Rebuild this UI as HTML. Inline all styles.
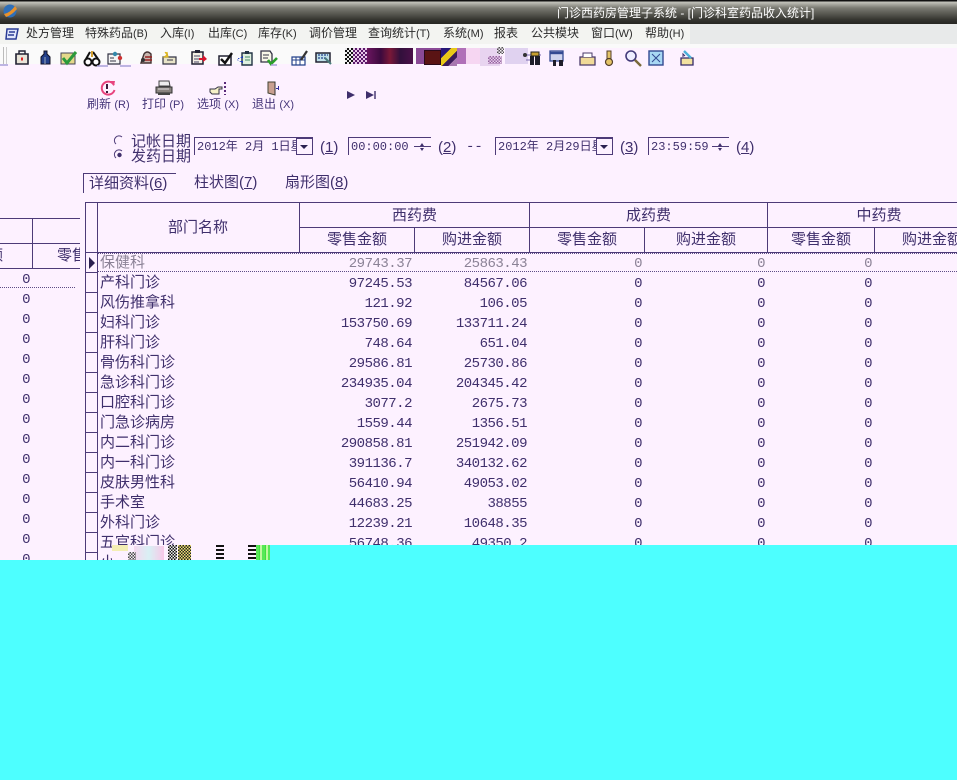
<!DOCTYPE html>
<html lang="zh"><head><meta charset="utf-8"><title>门诊科室药品收入统计</title>
<style>
html,body{margin:0;padding:0;background:#fdf1ff}
body{position:relative;width:957px;height:780px;overflow:hidden;font-family:"Liberation Sans","WenQuanYi Zen Hei","Noto Sans CJK SC",sans-serif;color:#3f2f6c}
div,span,svg{position:absolute}
u,small{position:static}
small{font-size:11px}
.t{white-space:nowrap;line-height:20px}
#title{left:0;top:0;width:957px;height:24px;background:linear-gradient(#111 0,#111 1px,#c4c4bc 2px,#7a7a72 8px,#33332e 20px,#262622 24px)}
#title .t{left:557px;top:3px;color:#fff;font-size:12px}
#menu{left:0;top:24px;width:957px;height:20px;background:#e8eaea}
#menu i{position:absolute;left:0;top:0;width:690px;height:20px;background:#f3f4f1}
#menu .t{top:-1px;font-size:12px;color:#2b2b2b}
#tb{left:0;top:44px;width:957px;height:20px;background:#fafafa}
#tbp{left:480px;top:48px;width:477px;height:20px;background:#fdf1ff}
.btn{font-size:12px;top:94px;color:#46367a}
.lab{font-size:15px}
.dt{font-size:12px;font-family:"Liberation Mono","WenQuanYi Zen Hei",monospace;color:#3f2f6c}
.ln{background:#4d3b78}
.dot{height:1px;background:repeating-linear-gradient(90deg,#5d4d86 0 1px,transparent 1px 2px)}
.h{font-size:15px;text-align:center;line-height:24px;height:24px}
.r{left:0;width:957px;height:20px;font-size:14px;line-height:20px;white-space:nowrap}
.r span{font-family:"Liberation Mono",monospace;text-align:right;width:90px;top:1px;letter-spacing:-.5px}
.r b{font-weight:normal;position:absolute;left:100px;top:0;font-size:15px}
.a{left:322px}.b{left:437px}.c{left:552px}.d{left:675px}.e{left:782px}
.noise{background:repeating-conic-gradient(#111 0 25%,#eee 0 50%) 0 0/3px 3px}
.noise2{background:repeating-conic-gradient(#5a1a6a 0 25%,#e8c8e8 0 50%) 0 0/4px 4px}
</style></head><body>

<div id="title"><div class="t">门诊西药房管理子系统 - [门诊科室药品收入统计]</div></div>
<svg style="left:2px;top:3px" width="16" height="16" viewBox="0 0 16 16"><circle cx="8" cy="8" r="6.5" fill="#2f6fb8"/><path d="M2 11Q8 10 13 3L15 6Q10 12 4 14Z" fill="#e8912b"/></svg>

<div id="menu"><i></i>
<div class="t" style="left:26px">处方管理</div><div class="t" style="left:85px">特殊药品<small>(B)</small></div><div class="t" style="left:160px">入库<small>(I)</small></div><div class="t" style="left:208px">出库<small>(C)</small></div><div class="t" style="left:258px">库存<small>(K)</small></div><div class="t" style="left:309px">调价管理</div><div class="t" style="left:368px">查询统计<small>(T)</small></div><div class="t" style="left:443px">系统<small>(M)</small></div><div class="t" style="left:494px">报表</div><div class="t" style="left:531px">公共模块</div><div class="t" style="left:591px">窗口<small>(W)</small></div><div class="t" style="left:645px">帮助<small>(H)</small></div>
</div>
<svg style="left:4px;top:26px" width="16" height="16" viewBox="0 0 16 16"><path d="M3 3H14L12 13H2Z" fill="#dfe6fa" stroke="#2b3d96" stroke-width="1.5"/><path d="M5 6H11M4 9H10" stroke="#2b3d96" stroke-width="1.5"/></svg>

<div id="tb"></div><div id="tbp"></div>
<div style="left:3px;top:47px;width:1px;height:17px;background:#bbb"></div>
<div style="left:6px;top:47px;width:1px;height:17px;background:#ccc"></div>

<!-- toolbar icons -->
<svg style="left:0;top:48px" width="345" height="20" viewBox="0 0 345 20">
<path d="M16 6H28V16H16Z" fill="#e8e4d8" stroke="#223" stroke-width="1.6"/><path d="M19 6V3H25V6" fill="none" stroke="#223" stroke-width="1.4"/><path d="M21 11H23" stroke="#d22" stroke-width="3"/>
<path d="M41 16V9L44 6V3H47V6L50 9V16Z" fill="#23408a" stroke="#112" stroke-width="1"/><path d="M45 9V16" stroke="#9ab" />
<path d="M61 5H75V16H61Z" fill="#e4d98a" stroke="#445" stroke-width="1"/><path d="M63 10L67 15L76 4" fill="none" stroke="#2a9a3a" stroke-width="3"/>
<circle cx="88" cy="14" r="3.5" fill="#fff" stroke="#111" stroke-width="2"/><circle cx="96" cy="14" r="3.5" fill="#fff" stroke="#111" stroke-width="2"/><path d="M90 4L86 11M93 4L98 11" stroke="#111" stroke-width="2"/><path d="M91 3H93V9H91Z" fill="#d4a030"/>
<path d="M108 6H120V16H108Z" fill="#f4f4f4" stroke="#334" stroke-width="1.2"/><circle cx="115" cy="6" r="2.2" fill="#38a"/><circle cx="120" cy="10" r="2.2" fill="#c33"/><path d="M110 10H114M110 13H116" stroke="#334"/>
<path d="M141 15L144 6Q147 2 151 6V15Z" fill="#c9b8b0" stroke="#433" stroke-width="1.4"/><path d="M145 9H152M145 12H152" stroke="#922" stroke-width="1.4"/><circle cx="143" cy="12" r="2" fill="#333"/>
<path d="M163 9H176V16H163Z" fill="#e8e4c8" stroke="#334" stroke-width="1.2"/><path d="M165 4L167 7L164 9L168 9L167 4" fill="#f2d02a" stroke="#d8b020"/><path d="M167 12H173" stroke="#334"/>
<path d="M192 4H203V16H192Z" fill="#f3efe4" stroke="#223" stroke-width="1.5"/><path d="M195 2H200V5H195Z" fill="#223"/><path d="M194 8H200M194 11H200M194 14H199" stroke="#446"/><path d="M199 10H203V7L207 11L203 14V12H199Z" fill="#d8142c"/>
<path d="M219 8H231V17H219Z" fill="#fff" stroke="#223" stroke-width="1.5"/><path d="M221 11L225 15L232 5" fill="none" stroke="#111" stroke-width="2.4"/>
<path d="M242 5H252V17H242Z" fill="#dff0e0" stroke="#234" stroke-width="1.4"/><path d="M245 3H249V6H245Z" fill="#234"/><path d="M238 10H243V8L237 12L243 15V13H238Z" fill="#1a3ac0"/><path d="M245 9H250M245 12H250" stroke="#486"/>
<path d="M261 3H270L272 6V14H261Z" fill="#f8f8e8" stroke="#334" stroke-width="1.3"/><path d="M263 7H269M263 10H268" stroke="#334"/><path d="M268 12L271 16L277 10" fill="none" stroke="#2aa02a" stroke-width="2.6"/>
<path d="M292 9H305V17H292Z" fill="#fff" stroke="#23408a" stroke-width="1.2"/><path d="M292 12H305M296 9V17M300 9V17" stroke="#23408a"/><path d="M301 12L307 3" stroke="#333" stroke-width="2.2"/>
<path d="M316 5H330V14H316Z" fill="#bfe0e8" stroke="#223" stroke-width="1.5"/><path d="M318 7H328M318 10H326" stroke="#23408a" stroke-width="1.2" stroke-dasharray="2 1"/><path d="M325 10L331 16" stroke="#4a7a7a" stroke-width="2"/>
<path d="M8 17H0M97 18H108M120 18H131M277 17H271" stroke="#a8a0d8" stroke-width="1.4"/>
</svg>

<!-- glitched toolbar band -->
<div class="noise" style="left:345px;top:48px;width:8px;height:16px;background-size:4px 4px"></div>
<div class="noise2" style="left:353px;top:48px;width:14px;height:16px"></div>
<div style="left:367px;top:48px;width:46px;height:16px;background:linear-gradient(90deg,#6b1660,#3c0a3e 30%,#7a1838 50%,#32103c 72%,#4a1048)"></div>
<div style="left:416px;top:48px;width:25px;height:16px;background:#8a4a96"></div>
<div style="left:424px;top:50px;width:15px;height:13px;background:#5a1414;border:1px solid #2a0a1a"></div>
<div style="left:441px;top:48px;width:16px;height:18px;background:linear-gradient(135deg,#281878 0 30%,#e8c818 30% 55%,#3a1a5a 55% 75%,#a878b0 75%)"></div>
<div style="left:457px;top:48px;width:9px;height:16px;background:#b070b8"></div>
<div style="left:466px;top:48px;width:14px;height:16px;background:#f6d6f2"></div>
<div style="left:480px;top:48px;width:20px;height:18px;background:#e8d4f0"></div>
<div class="noise" style="left:497px;top:47px;width:7px;height:7px;opacity:.7;background-size:3px 3px"></div>
<div class="noise2" style="left:488px;top:56px;width:14px;height:8px;opacity:.6;background-size:3px 3px"></div>
<div style="left:505px;top:48px;width:23px;height:16px;background:#e0d2f0"></div>
<svg style="left:505px;top:48px" width="200" height="20" viewBox="0 0 200 20">
<circle cx="20" cy="7" r="2" fill="#333"/><path d="M22 7H36M21 12H26" stroke="#7a6ab0"/>
<path d="M25 8H29V17H25ZM30 8H35V17H30Z" fill="#1e1e2a"/><path d="M26 4H34V8H26Z" fill="#c8a030" stroke="#222"/>
<path d="M45 3H58V13H45Z" fill="#cfd4ee" stroke="#334a92" stroke-width="1.3"/><path d="M45 5H58" stroke="#334a92" stroke-width="2.4"/><path d="M48 12H51V18H48ZM54 12H58V18H54Z" fill="#1e1e2a"/>
<path d="M75 9H90V17H75Z" fill="#f0da98" stroke="#4a3a6a" stroke-width="1.3"/><path d="M78 9V5H87V9" fill="#fff" stroke="#4a3a6a"/>
<path d="M102 3H106V11H102Z" fill="#e4c468" stroke="#55402a"/><circle cx="104" cy="14" r="3.5" fill="#e4c468" stroke="#55402a" stroke-width="1.2"/>
<circle cx="126" cy="8" r="5" fill="#eef" stroke="#443c7a" stroke-width="1.6"/><path d="M130 12L136 18" stroke="#7a6a3a" stroke-width="2.4"/>
<rect x="144" y="3" width="14" height="14" fill="#a8d8f4" stroke="#334a92" stroke-width="1.4"/><path d="M147 6L155 14M155 6L147 14" stroke="#334a92"/>
<path d="M176 10H188V17H176Z" fill="#f2e2a0" stroke="#332a6a" stroke-width="1.3"/><path d="M178 9V6L180 8" stroke="#332a6a" fill="none"/><path d="M179 3L186 10" stroke="#4ab0d8" stroke-width="2.4"/>
</svg>

<!-- action buttons -->
<svg style="left:99px;top:80px" width="18" height="17" viewBox="0 0 18 17"><path d="M15 5A6.5 6.5 0 1 0 15.5 10" fill="none" stroke="#e8447e" stroke-width="2"/><path d="M10 1L16 1L15 6Z" fill="#e8447e"/><path d="M8 4V9M8 11V13" stroke="#3a1a3a" stroke-width="2"/></svg>
<svg style="left:155px;top:80px" width="18" height="16" viewBox="0 0 18 16"><path d="M4 1H14L15 6H4Z" fill="#eee" stroke="#444"/><path d="M1 7H17V13H1Z" fill="#8a8480" stroke="#333"/><path d="M3 13H15V15H3Z" fill="#444"/><path d="M3 9H14" stroke="#ddd"/></svg>
<svg style="left:209px;top:81px" width="18" height="16" viewBox="0 0 18 16"><path d="M1 8H6L9 6H13V8H10V13H3L1 11Z" fill="#f6f2c8" stroke="#334"/><path d="M16 1V14" stroke="#5a2a7a" stroke-width="2" stroke-dasharray="2 2"/></svg>
<svg style="left:266px;top:81px" width="16" height="16" viewBox="0 0 16 16"><path d="M2 1H9V14L2 12Z" fill="#c8a090" stroke="#443"/><path d="M9 1V14" stroke="#333"/><path d="M10 7H12V5H13V9H12V8H10ZM11 7L13 5" fill="#33309a"/></svg>
<div class="t btn" style="left:87px">刷新 <small>(R)</small></div><div class="t btn" style="left:142px">打印 <small>(P)</small></div><div class="t btn" style="left:197px">选项 <small>(X)</small></div><div class="t btn" style="left:252px">退出 <small>(X)</small></div>
<svg style="left:345px;top:90px" width="34" height="10" viewBox="0 0 34 10"><path d="M2 1L10 5L2 9Z" fill="#3f2f6c"/><path d="M21 1L29 5L21 9Z" fill="#3f2f6c"/><path d="M30 1V9" stroke="#3f2f6c" stroke-width="1.4"/></svg>

<!-- date filter -->
<svg style="left:112px;top:134px" width="14" height="30" viewBox="0 0 14 30"><path d="M10 3A4.5 4.5 0 0 0 4 10" fill="none" stroke="#4d3b78"/><path d="M10 17A4.5 4.5 0 0 0 4 24" fill="none" stroke="#4d3b78"/><circle cx="7.5" cy="21" r="2.2" fill="#3f2f6c"/></svg>
<div class="t lab" style="left:131px;top:132px">记帐日期</div><div class="t lab" style="left:131px;top:147px">发药日期</div>

<div class="ln" style="left:194px;top:137px;width:119px;height:1px"></div><div class="ln" style="left:194px;top:137px;width:1px;height:18px"></div>
<div class="t dt" style="left:197px;top:137px;width:99px;overflow:hidden">2012年 2月 1日星</div>
<div style="left:296px;top:138px;width:17px;height:17px;border:1px solid #4d3b78;box-sizing:border-box;background:#fdf1ff"></div>
<div style="left:300px;top:145px;width:0;height:0;border:4px solid transparent;border-top:4px solid #2b2050"></div>
<div class="t lab" style="left:320px;top:138px">(<u>1</u>)</div>

<div class="ln" style="left:348px;top:137px;width:83px;height:1px"></div><div class="ln" style="left:348px;top:137px;width:1px;height:18px"></div>
<div class="t dt" style="left:351px;top:137px">00:00:00</div>
<div class="ln" style="left:414px;top:146px;width:17px;height:1px"></div>
<div style="left:420px;top:141px;width:0;height:0;border:2px solid transparent;border-bottom:3px solid #3f2f6c"></div>
<div style="left:420px;top:148px;width:0;height:0;border:2px solid transparent;border-top:3px solid #3f2f6c"></div>
<div class="t lab" style="left:438px;top:138px">(<u>2</u>)</div>
<div class="t dt" style="left:466px;top:137px;font-size:14px">--</div>

<div class="ln" style="left:495px;top:137px;width:118px;height:1px"></div><div class="ln" style="left:495px;top:137px;width:1px;height:18px"></div>
<div class="t dt" style="left:498px;top:137px;width:98px;overflow:hidden">2012年 2月29日星</div>
<div style="left:596px;top:138px;width:17px;height:17px;border:1px solid #4d3b78;box-sizing:border-box;background:#fdf1ff"></div>
<div style="left:600px;top:145px;width:0;height:0;border:4px solid transparent;border-top:4px solid #2b2050"></div>
<div class="t lab" style="left:620px;top:138px">(<u>3</u>)</div>

<div class="ln" style="left:648px;top:137px;width:81px;height:1px"></div><div class="ln" style="left:648px;top:137px;width:1px;height:18px"></div>
<div class="t dt" style="left:651px;top:137px">23:59:59</div>
<div class="ln" style="left:712px;top:146px;width:17px;height:1px"></div>
<div style="left:718px;top:141px;width:0;height:0;border:2px solid transparent;border-bottom:3px solid #3f2f6c"></div>
<div style="left:718px;top:148px;width:0;height:0;border:2px solid transparent;border-top:3px solid #3f2f6c"></div>
<div class="t lab" style="left:736px;top:138px">(<u>4</u>)</div>

<!-- tabs -->
<div class="ln" style="left:83px;top:173px;width:93px;height:1px"></div><div class="ln" style="left:83px;top:173px;width:1px;height:20px"></div>
<div class="t lab" style="left:89px;top:174px">详细资料(<u>6</u>)</div>
<div class="t lab" style="left:194px;top:173px">柱状图(<u>7</u>)</div>
<div class="t lab" style="left:285px;top:173px">扇形图(<u>8</u>)</div>

<!-- left grid -->
<div class="ln" style="left:0;top:218px;width:80px;height:1px"></div>
<div class="ln" style="left:0;top:243px;width:80px;height:1px"></div>
<div class="ln" style="left:32px;top:218px;width:1px;height:50px"></div>
<div class="ln" style="left:0;top:268px;width:80px;height:1px"></div>
<div class="t h" style="left:-12px;top:244px;width:15px;overflow:hidden;direction:rtl">额</div>
<div class="t lab" style="left:57px;top:246px;width:23px;overflow:hidden">零售</div>
<div class="dot" style="left:0;top:287px;width:76px"></div>
<div class="r" style="top:269px;width:30px"><span style="left:0;width:30px">0</span></div>
<div class="r" style="top:289px;width:30px"><span style="left:0;width:30px">0</span></div>
<div class="r" style="top:309px;width:30px"><span style="left:0;width:30px">0</span></div>
<div class="r" style="top:329px;width:30px"><span style="left:0;width:30px">0</span></div>
<div class="r" style="top:349px;width:30px"><span style="left:0;width:30px">0</span></div>
<div class="r" style="top:369px;width:30px"><span style="left:0;width:30px">0</span></div>
<div class="r" style="top:389px;width:30px"><span style="left:0;width:30px">0</span></div>
<div class="r" style="top:409px;width:30px"><span style="left:0;width:30px">0</span></div>
<div class="r" style="top:429px;width:30px"><span style="left:0;width:30px">0</span></div>
<div class="r" style="top:449px;width:30px"><span style="left:0;width:30px">0</span></div>
<div class="r" style="top:469px;width:30px"><span style="left:0;width:30px">0</span></div>
<div class="r" style="top:489px;width:30px"><span style="left:0;width:30px">0</span></div>
<div class="r" style="top:509px;width:30px"><span style="left:0;width:30px">0</span></div>
<div class="r" style="top:529px;width:30px"><span style="left:0;width:30px">0</span></div>
<div class="r" style="top:549px;width:30px"><span style="left:0;width:30px">0</span></div>

<!-- main grid lines -->
<div class="ln" style="left:85px;top:202px;width:872px;height:1px"></div>
<div class="ln" style="left:299px;top:227px;width:658px;height:1px"></div>
<div class="ln" style="left:85px;top:252px;width:872px;height:1px"></div>
<div class="ln" style="left:85px;top:202px;width:1px;height:360px"></div>
<div class="ln" style="left:97px;top:202px;width:1px;height:360px"></div>
<div class="ln" style="left:299px;top:202px;width:1px;height:50px"></div>
<div class="ln" style="left:529px;top:202px;width:1px;height:50px"></div>
<div class="ln" style="left:767px;top:202px;width:1px;height:50px"></div>
<div class="ln" style="left:414px;top:227px;width:1px;height:25px"></div>
<div class="ln" style="left:644px;top:227px;width:1px;height:25px"></div>
<div class="ln" style="left:874px;top:227px;width:1px;height:25px"></div>
<div class="dot" style="left:98px;top:253px;width:859px"></div>
<div class="dot" style="left:98px;top:271px;width:859px"></div>
<div class="ln" style="left:85px;top:272px;width:13px;height:1px"></div>
<div class="ln" style="left:85px;top:292px;width:13px;height:1px"></div>
<div class="ln" style="left:85px;top:312px;width:13px;height:1px"></div>
<div class="ln" style="left:85px;top:332px;width:13px;height:1px"></div>
<div class="ln" style="left:85px;top:352px;width:13px;height:1px"></div>
<div class="ln" style="left:85px;top:372px;width:13px;height:1px"></div>
<div class="ln" style="left:85px;top:392px;width:13px;height:1px"></div>
<div class="ln" style="left:85px;top:412px;width:13px;height:1px"></div>
<div class="ln" style="left:85px;top:432px;width:13px;height:1px"></div>
<div class="ln" style="left:85px;top:452px;width:13px;height:1px"></div>
<div class="ln" style="left:85px;top:472px;width:13px;height:1px"></div>
<div class="ln" style="left:85px;top:492px;width:13px;height:1px"></div>
<div class="ln" style="left:85px;top:512px;width:13px;height:1px"></div>
<div class="ln" style="left:85px;top:532px;width:13px;height:1px"></div>
<div class="ln" style="left:85px;top:552px;width:13px;height:1px"></div>
<div style="left:89px;top:257px;width:0;height:0;border:6px solid transparent;border-left:6px solid #2b2050;border-right:0"></div>

<!-- headers -->
<div class="t h" style="left:98px;top:216px;width:200px">部门名称</div>
<div class="t h" style="left:300px;top:204px;width:229px">西药费</div>
<div class="t h" style="left:530px;top:204px;width:237px">成药费</div>
<div class="t h" style="left:768px;top:204px;width:222px">中药费</div>
<div class="t h" style="left:300px;top:228px;width:114px">零售金额</div>
<div class="t h" style="left:415px;top:228px;width:114px">购进金额</div>
<div class="t h" style="left:530px;top:228px;width:114px">零售金额</div>
<div class="t h" style="left:645px;top:228px;width:122px">购进金额</div>
<div class="t h" style="left:768px;top:228px;width:106px">零售金额</div>
<div class="t h" style="left:875px;top:228px;width:114px">购进金额</div>

<!-- rows -->
<div class="r" style="top:253px;color:#8b8296"><b>保健科</b><span class="a">29743.37</span><span class="b">25863.43</span><span class="c">0</span><span class="d">0</span><span class="e">0</span></div>
<div class="r" style="top:273px"><b>产科门诊</b><span class="a">97245.53</span><span class="b">84567.06</span><span class="c">0</span><span class="d">0</span><span class="e">0</span></div>
<div class="r" style="top:293px"><b>风伤推拿科</b><span class="a">121.92</span><span class="b">106.05</span><span class="c">0</span><span class="d">0</span><span class="e">0</span></div>
<div class="r" style="top:313px"><b>妇科门诊</b><span class="a">153750.69</span><span class="b">133711.24</span><span class="c">0</span><span class="d">0</span><span class="e">0</span></div>
<div class="r" style="top:333px"><b>肝科门诊</b><span class="a">748.64</span><span class="b">651.04</span><span class="c">0</span><span class="d">0</span><span class="e">0</span></div>
<div class="r" style="top:353px"><b>骨伤科门诊</b><span class="a">29586.81</span><span class="b">25730.86</span><span class="c">0</span><span class="d">0</span><span class="e">0</span></div>
<div class="r" style="top:373px"><b>急诊科门诊</b><span class="a">234935.04</span><span class="b">204345.42</span><span class="c">0</span><span class="d">0</span><span class="e">0</span></div>
<div class="r" style="top:393px"><b>口腔科门诊</b><span class="a">3077.2</span><span class="b">2675.73</span><span class="c">0</span><span class="d">0</span><span class="e">0</span></div>
<div class="r" style="top:413px"><b>门急诊病房</b><span class="a">1559.44</span><span class="b">1356.51</span><span class="c">0</span><span class="d">0</span><span class="e">0</span></div>
<div class="r" style="top:433px"><b>内二科门诊</b><span class="a">290858.81</span><span class="b">251942.09</span><span class="c">0</span><span class="d">0</span><span class="e">0</span></div>
<div class="r" style="top:453px"><b>内一科门诊</b><span class="a">391136.7</span><span class="b">340132.62</span><span class="c">0</span><span class="d">0</span><span class="e">0</span></div>
<div class="r" style="top:473px"><b>皮肤男性科</b><span class="a">56410.94</span><span class="b">49053.02</span><span class="c">0</span><span class="d">0</span><span class="e">0</span></div>
<div class="r" style="top:493px"><b>手术室</b><span class="a">44683.25</span><span class="b">38855</span><span class="c">0</span><span class="d">0</span><span class="e">0</span></div>
<div class="r" style="top:513px"><b>外科门诊</b><span class="a">12239.21</span><span class="b">10648.35</span><span class="c">0</span><span class="d">0</span><span class="e">0</span></div>
<div class="r" style="top:533px"><b>五官科门诊</b><span class="a">56748.36</span><span class="b">49350.2</span><span class="c">0</span><span class="d">0</span><span class="e">0</span></div>
<div class="r" style="top:553px"><b>小儿科门诊</b></div>

<!-- corrupted strip -->
<div style="left:112px;top:545px;width:158px;height:15px;background:#fdf1ff"></div>
<div style="left:112px;top:545px;width:16px;height:6px;background:#f4eeb4"></div>
<div style="left:134px;top:546px;width:30px;height:14px;background:linear-gradient(90deg,#f6d8f0,#d8f0f4,#f8c8e8)"></div>
<div class="noise" style="left:128px;top:552px;width:8px;height:8px;opacity:.75"></div>
<div class="noise" style="left:168px;top:545px;width:9px;height:15px"></div>
<div class="noise" style="left:178px;top:545px;width:13px;height:15px;background:repeating-conic-gradient(#222 0 25%,#eee070 0 50%) 0 0/3px 3px"></div>
<div class="noise" style="left:216px;top:545px;width:8px;height:15px;background:repeating-linear-gradient(#111 0 2px,#fdf1ff 2px 4px)"></div>
<div class="noise" style="left:248px;top:545px;width:8px;height:15px;background:repeating-linear-gradient(#111 0 2px,#fdf1ff 2px 4px)"></div>
<div style="left:256px;top:545px;width:14px;height:15px;background:repeating-linear-gradient(90deg,#58e858 0 3px,#40e040 3px 4px,#c0f8a0 4px 6px)"></div>

<!-- cyan cover -->
<div style="left:270px;top:545px;width:687px;height:15px;background:#4dffff"></div>
<div style="left:0;top:560px;width:957px;height:220px;background:#4dffff"></div>
</body></html>
